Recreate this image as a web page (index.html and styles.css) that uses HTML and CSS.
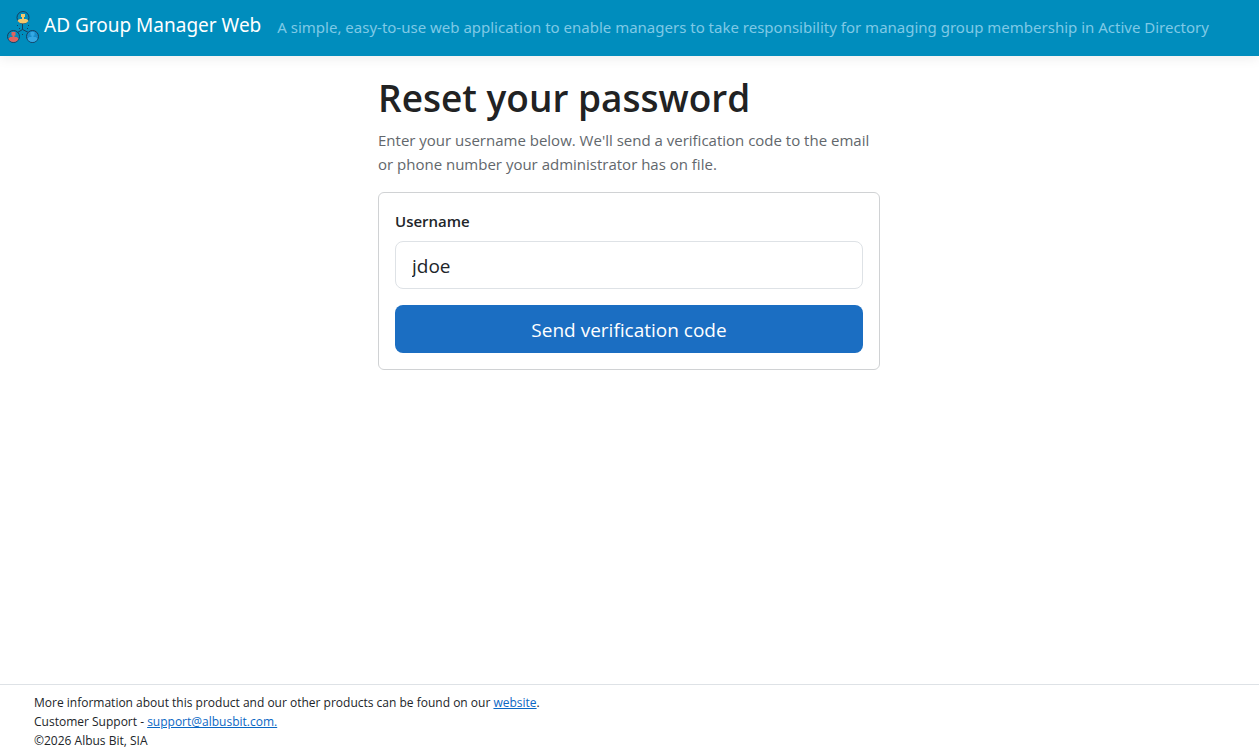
FILE: index.html
```html
<!DOCTYPE html>
<html lang="en">
<head>
<meta charset="utf-8">
<meta name="viewport" content="width=device-width, initial-scale=1">
<title>Reset your password - AD Group Manager Web</title>
<link rel="stylesheet" href="styles.css">
</head>
<body>
<header class="topbar">
  <a class="brand" href="#">
    <svg class="brand-logo" viewBox="0 0 32 32" aria-hidden="true">
      <g fill="none" stroke="#183e5d" stroke-width="1">
        <path d="M15.500 12.500v6M15.500 18.500L10.500 21.500M15.500 18.500L21.500 21.500"/>
        <circle cx="16" cy="6.500" r="6"/>
        <circle cx="6.500" cy="25.500" r="6"/>
        <circle cx="25.500" cy="25.500" r="6" fill="#168ccb"/>
      </g>
      <g fill="#183e5d">
        <path d="M10 14h1v1h-1zM21 14h1v1h-1zM12 17h1v1h-1zM20 17h1v1h-1zM15 23h1v1h-1z"/>
      </g>
      <path fill="#f3c76b" d="M14 3h4v3h-1v2h2q2 .5 2.500 2q-2 2.500-5.500 2.500t-5.500-2.500q.5-1.500 2.500-2h2V6h-1z"/>
      <path fill="#e2635f" d="M4.500 21h4v3.500h-1v1.500h2q1.500 .5 2 2q-1.500 3-5 3t-5-3q.5-1.500 2-2h2v-1.500h-1z"/>
      <path fill="#35a8e4" d="M23.500 21h4v3.500h-1v1.500h2q1.500 .5 2 2q-1.500 3-5 3t-5-3q.5-1.500 2-2h2v-1.500h-1z"/>
    </svg>
    <span class="brand-name">AD Group Manager Web</span>
  </a>
  <span class="tagline">A simple, easy-to-use web application to enable managers to take responsibility for managing group membership in Active Directory</span>
</header>
<main class="content">
  <section class="reset">
    <h1 class="title">Reset your password</h1>
    <p class="lead">Enter your username below. We'll send a verification code to the email or phone number your administrator has on file.</p>
    <form class="card">
      <label class="field-label" for="username">Username</label>
      <input class="field" id="username" name="username" type="text" value="jdoe">
      <button class="submit" type="submit">Send verification code</button>
    </form>
  </section>
</main>
<footer class="footer">
  <p class="footer-line">More information about this product and our other products can be found on our <a class="link" href="#">website</a>.</p>
  <p class="footer-line">Customer Support - <a class="link" href="mailto:support@albusbit.com">support@albusbit.com.</a></p>
  <p class="footer-line">©2026 Albus Bit, SIA</p>
</footer>
</body>
</html>
```
FILE: styles.css
```css
*,
*::before,
*::after {
  box-sizing: border-box;
}

body {
  margin: 0;
  min-height: 100vh;
  display: flex;
  flex-direction: column;
  background: #fff;
  color: #212529;
  font-family: "Segoe UI", "Open Sans", sans-serif;
  font-size: 15px;
  line-height: 24px;
}

.topbar {
  display: flex;
  align-items: center;
  gap: 16px;
  min-height: 56px;
  padding: 0 7px 2px;
  background: #008dbd;
  box-shadow: 0 2px 12px rgba(0, 0, 0, 0.08);
  font-family: "Segoe UI", "Noto Sans", sans-serif;
}

.brand {
  display: flex;
  align-items: center;
  gap: 5px;
  color: #fff;
  text-decoration: none;
  white-space: nowrap;
}

.brand-logo {
  width: 32px;
  height: 32px;
}

.brand-name {
  font-size: 19px;
  line-height: 28px;
  padding-bottom: 4px;
}

.tagline {
  color: #7fc9e6;
}

.content {
  flex: 1;
  padding: 18px 17px 18px 16px;
}

.reset {
  max-width: 502px;
  margin: 0 auto;
}

.title {
  margin: 0 0 6px;
  color: #212223;
  font-size: 37px;
  font-weight: 600;
  line-height: 48px;
}

.lead {
  margin: 0 0 16px;
  color: #62676c;
}

.card {
  display: flex;
  flex-direction: column;
  padding: 16px;
  border: 1px solid #d0d2d4;
  border-radius: 6px;
}

.field-label {
  margin-bottom: 8px;
  font-weight: 600;
}

.field {
  height: 48px;
  width: 100%;
  margin-bottom: 16px;
  padding: 2px 16px 0;
  border: 1px solid #dee2e6;
  border-radius: 8px;
  background: #fff;
  color: #212529;
  font-family: inherit;
  font-size: 19px;
}

.submit {
  height: 48px;
  padding: 2px 16px 0;
  border: 0;
  border-radius: 8px;
  background: #1b6ec2;
  color: #fff;
  font-family: inherit;
  font-size: 19px;
}

.footer {
  padding: 8px 34px 2px;
  border-top: 1px solid #dee2e6;
  font-size: 12px;
  line-height: 19px;
}

.footer-line {
  margin: 0;
}

.link {
  color: #0b68c4;
}
```
